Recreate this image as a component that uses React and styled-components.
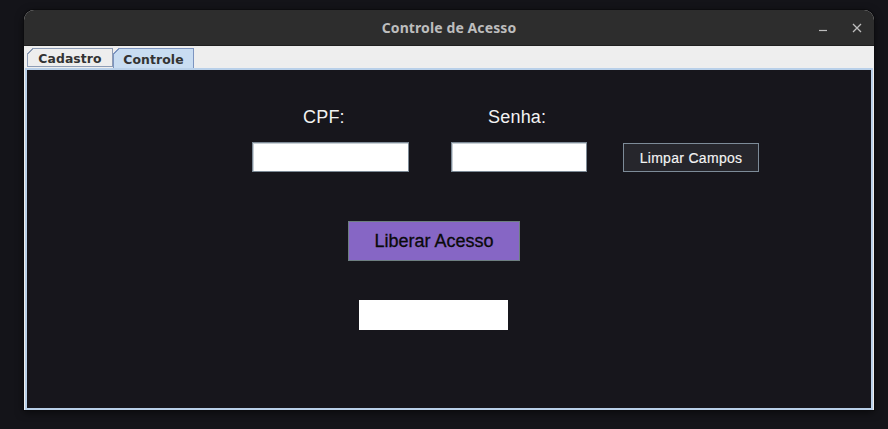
import React from "react";
import styled, { createGlobalStyle } from "styled-components";

const Global = createGlobalStyle`
  html, body { margin: 0; padding: 0; background: #141419; }
  body { font-family: "Liberation Sans", Arial, sans-serif; }
  * { box-sizing: border-box; }
`;

const Desktop = styled.div`
  width: 888px;
  height: 429px;
  padding: 10px 0 0 24px;
  background: #141419;
`;

const Window = styled.div`
  width: 850px;
  height: 400px;
  display: flex;
  flex-direction: column;
  background: #eeeeee;
  border-radius: 10px 10px 0 0;
  box-shadow: 0 0 0 1px #0c0c0f, 0 2px 8px rgba(0, 0, 0, 0.6);
`;

const TitleBar = styled.div`
  height: 36px;
  flex: none;
  display: flex;
  align-items: center;
  justify-content: center;
  position: relative;
  background: #2d2d2d;
  border-radius: 10px 10px 0 0;
  border-bottom: 1px solid #1f1f1f;
`;

const Title = styled.div`
  font-family: "Noto Sans", "Open Sans", sans-serif;
  font-weight: 700;
  font-size: 14px;
  color: #bdbdbd;
  letter-spacing: 0.1px;
`;

const Controls = styled.div`
  position: absolute;
  right: 8px;
  top: 0;
  height: 36px;
  display: flex;
  align-items: center;
  gap: 16px;
`;

const CtlBtn = styled.div`
  width: 18px;
  height: 18px;
  display: flex;
  align-items: center;
  justify-content: center;
`;

const TabStrip = styled.div`
  height: 22px;
  flex: none;
  display: flex;
  align-items: flex-end;
  padding-left: 3px;
  background: #eeeeee;
`;

const Tab = styled.div`
  position: relative;
  height: ${(p) => (p.$active ? "20px" : "19px")};
  width: ${(p) => p.$w}px;
  margin-bottom: ${(p) => (p.$active ? "0" : "1px")};
  display: flex;
  align-items: center;
  justify-content: center;
  padding-top: 1px;
  font-family: "DejaVu Sans", sans-serif;
  font-weight: 700;
  font-size: 12.4px;
  letter-spacing: 0.1px;
  color: #333333;
  background: ${(p) => (p.$active ? "#c9ddf2" : "#eeeeee")};
  border: 1px solid ${(p) => (p.$active ? "#7d95c0" : "#8d9cb5")};
  border-bottom: ${(p) => (p.$active ? "none" : "1px solid #8d9cb5")};
  &::before {
    content: "";
    position: absolute;
    left: -1px;
    top: -1px;
    width: 6px;
    height: 6px;
    background: linear-gradient(
      135deg,
      #eeeeee 0,
      #eeeeee 45%,
      ${(p) => (p.$active ? "#7d95c0" : "#8d9cb5")} 45%,
      ${(p) => (p.$active ? "#7d95c0" : "#8d9cb5")} 62%,
      transparent 62%
    );
  }
`;

const Panel = styled.div`
  flex: 1;
  margin-left: 1px;
  margin-right: 1px;
  background: #17161c;
  border: 2px solid #b9d0e9;
  display: flex;
  flex-direction: column;
`;

const Row = styled.div`
  display: flex;
  align-items: flex-start;
  padding-left: ${(p) => p.$left}px;
  margin-top: ${(p) => p.$top}px;
`;

const Label = styled.div`
  width: ${(p) => p.$w}px;
  height: 20px;
  line-height: 20px;
  font-family: "Liberation Sans", Arial, sans-serif;
  font-size: 18px;
  color: #f2f2f2;
  letter-spacing: 0.2px;
`;

const Field = styled.div`
  width: ${(p) => p.$w}px;
  height: 30px;
  margin-left: ${(p) => p.$ml || 0}px;
  background: #ffffff;
  border: 1px solid #7d8a96;
  box-shadow: inset 1px 1px 0 #c9d0d6;
`;

const SmallButton = styled.div`
  width: 136px;
  height: 29px;
  margin-top: 1px;
  margin-left: ${(p) => p.$ml || 0}px;
  display: flex;
  align-items: center;
  justify-content: center;
  background: #26262c;
  border: 1px solid #7d8b98;
  font-family: "Liberation Sans", Arial, sans-serif;
  font-size: 14px;
  letter-spacing: 0.3px;
  color: #f4f4f4;
  -webkit-text-stroke: 0.15px #f4f4f4;
`;

const BigButton = styled.div`
  width: 172px;
  height: 40px;
  display: flex;
  align-items: center;
  justify-content: center;
  background: #8666c5;
  border: 1px solid #6e7f80;
  font-family: "Liberation Sans", Arial, sans-serif;
  font-size: 18px;
  color: #0a0a0a;
  -webkit-text-stroke: 0.3px #0a0a0a;
`;

const Output = styled.div`
  width: 149px;
  height: 30px;
  background: #ffffff;
`;

export default function App() {
  return (
    <>
      <Global />
      <Desktop>
        <Window>
          <TitleBar>
            <Title>Controle de Acesso</Title>
            <Controls>
              <CtlBtn>
                <svg width="10" height="10" viewBox="0 0 10 10">
                  <line x1="1" y1="7.5" x2="9" y2="7.5" stroke="#bdbdbd" strokeWidth="1.2" />
                </svg>
              </CtlBtn>
              <CtlBtn>
                <svg width="10" height="10" viewBox="0 0 10 10">
                  <path d="M1 1 L9 9 M9 1 L1 9" stroke="#bdbdbd" strokeWidth="1.3" />
                </svg>
              </CtlBtn>
            </Controls>
          </TitleBar>
          <TabStrip>
            <Tab $w={86}>Cadastro</Tab>
            <Tab $w={81} $active>Controle</Tab>
          </TabStrip>
          <Panel>
            <Row $left={276} $top={37}>
              <Label $w={185}>CPF:</Label>
              <Label $w={80}>Senha:</Label>
            </Row>
            <Row $left={225} $top={15}>
              <Field $w={157} />
              <Field $w={136} $ml={42} />
              <SmallButton $ml={36}>Limpar Campos</SmallButton>
            </Row>
            <Row $left={321} $top={49}>
              <BigButton>Liberar Acesso</BigButton>
            </Row>
            <Row $left={332} $top={39}>
              <Output />
            </Row>
          </Panel>
        </Window>
      </Desktop>
    </>
  );
}
